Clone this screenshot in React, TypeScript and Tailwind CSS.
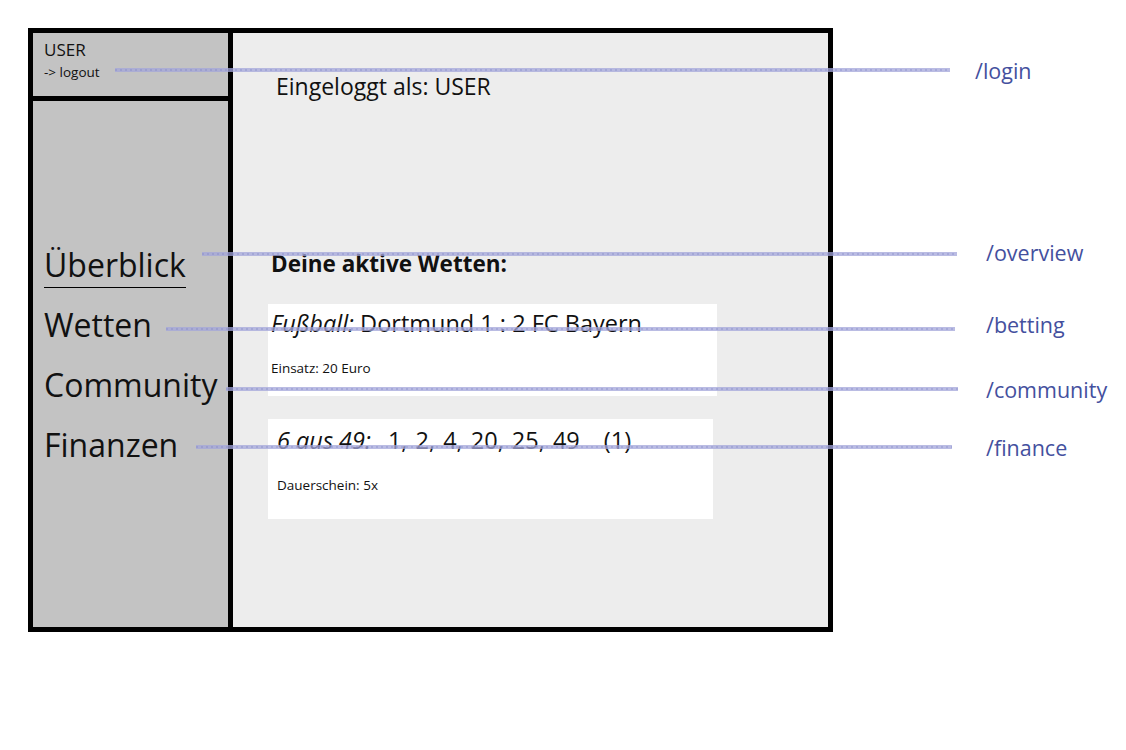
import React from "react";

const font = { fontFamily: "'Open Sans', Lato, sans-serif" };

function Lines() {
  const lines = [
    { y: 70, x1: 115, x2: 950 },
    { y: 254, x1: 202, x2: 957 },
    { y: 329, x1: 166, x2: 955 },
    { y: 389, x1: 226, x2: 958 },
    { y: 447, x1: 196, x2: 952 },
  ];
  return (
    <svg className="pointer-events-none absolute left-0 top-0" width="1126" height="750">
      {lines.map((l, i) => (
        <g key={i}>
          <line x1={l.x1} y1={l.y} x2={l.x2} y2={l.y} stroke="#a3a6da" strokeOpacity="0.75" strokeWidth="4" />
          <line x1={l.x1} y1={l.y} x2={l.x2} y2={l.y} stroke="#7e83c6" strokeOpacity="0.35" strokeWidth="2" strokeDasharray="2 3" />
        </g>
      ))}
    </svg>
  );
}

export default function App() {
  return (
    <div className="relative h-[750px] w-[1126px] overflow-hidden bg-white text-[#111]" style={font}>
      <div className="flex">
        <div className="ml-[28px] mt-[28px] flex h-[604px] w-[805px] border-[5px] border-black">
          <div className="flex w-[200px] flex-col border-r-[5px] border-black bg-[#c3c3c3]">
            <div className="h-[68px] border-b-[5px] border-black pl-[11px] pt-[6px]">
              <div className="text-[17px] leading-[22px]">USER</div>
              <div className="mt-[3px] text-[13.5px] leading-[17px]">-&gt; logout</div>
            </div>
            <div className="flex flex-col gap-[14px] pl-[11px] pt-[141px] text-[32px] leading-[46px]">
              <div className="w-fit border-b border-black leading-[45px]">Überblick</div>
              <div>Wetten</div>
              <div>Community</div>
              <div>Finanzen</div>
            </div>
          </div>
          <div className="flex-1 bg-[#ededed]">
            <div className="pl-[43px] pt-[38px] text-[23px] leading-[30px]">Eingeloggt als: USER</div>
            <div className="pl-[38px] pt-[148px] text-[22.5px] font-bold leading-[30px]">Deine aktive Wetten:</div>
            <div className="ml-[35px] mt-[25px] h-[92px] w-[449px] bg-white pl-[3px] pt-[3px]">
              <div className="text-[23.5px] leading-[32px]">
                <span className="italic">Fußball:</span> Dortmund 1 : 2 FC Bayern
              </div>
              <div className="mt-[21px] text-[13.5px] leading-[17px]">Einsatz: 20 Euro</div>
            </div>
            <div className="ml-[35px] mt-[23px] h-[100px] w-[445px] bg-white pl-[9px] pt-[5px]">
              <div className="flex text-[23.5px] leading-[32px]">
                <span className="italic">6 aus 49:</span>
                <span className="ml-[17px] [word-spacing:2px]">1, 2, 4, 20, 25, 49</span>
                <span className="ml-[24px]">(1)</span>
              </div>
              <div className="mt-[21px] text-[13.5px] leading-[17px]">Dauerschein: 5x</div>
            </div>
          </div>
        </div>
      </div>
      <Lines />
      <div className="absolute left-[975px] top-[57px] text-[21.5px] leading-[28px] text-[#44509e]">/login</div>
      <div className="absolute left-[986px] top-[239px] text-[21.5px] leading-[28px] text-[#44509e]">/overview</div>
      <div className="absolute left-[986px] top-[311px] text-[21.5px] leading-[28px] text-[#44509e]">/betting</div>
      <div className="absolute left-[986px] top-[376px] text-[21.5px] leading-[28px] text-[#44509e]">/community</div>
      <div className="absolute left-[986px] top-[434px] text-[21.5px] leading-[28px] text-[#44509e]">/finance</div>
    </div>
  );
}
